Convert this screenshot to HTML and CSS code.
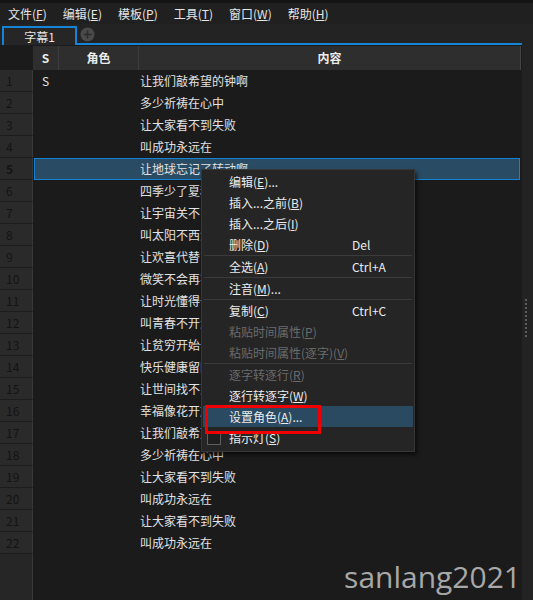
FILE: index.html
```html
<!DOCTYPE html>
<html lang="zh">
<head>
<meta charset="utf-8">
<link rel="stylesheet" href="styles.css">
</head>
<body>
<div class="app">
  <div class="menubar">
    <span class="mb-item">文件(<u>F</u>)</span>
    <span class="mb-item">编辑(<u>E</u>)</span>
    <span class="mb-item">模板(<u>P</u>)</span>
    <span class="mb-item">工具(<u>T</u>)</span>
    <span class="mb-item">窗口(<u>W</u>)</span>
    <span class="mb-item">帮助(<u>H</u>)</span>
  </div>
  <div class="workarea">
    <div class="main">
      <div class="tabbar">
        <div class="tab">字幕1</div>
        <div class="tab-rest">
          <svg class="plus" width="15" height="15" viewBox="0 0 15 15">
            <circle cx="7.5" cy="7.5" r="7" fill="#4a4a4a"/>
            <path d="M7.5 3.5v8M3.5 7.5h8" stroke="#2a2a2a" stroke-width="1.6"/>
          </svg>
        </div>
      </div>
      <div class="header">
        <div class="h-num"></div>
        <div class="h-cell h-s">S</div>
        <div class="h-cell h-role">角色</div>
        <div class="h-cell h-content">内容</div>
      </div>
      <div class="rows">
        <div class="row"><div class="num">1</div><div class="cells"><div class="c-s">S</div><div class="c-role"></div><div class="c-text">让我们敲希望的钟啊</div></div></div>
        <div class="row"><div class="num">2</div><div class="cells"><div class="c-s"></div><div class="c-role"></div><div class="c-text">多少祈祷在心中</div></div></div>
        <div class="row"><div class="num">3</div><div class="cells"><div class="c-s"></div><div class="c-role"></div><div class="c-text">让大家看不到失败</div></div></div>
        <div class="row"><div class="num">4</div><div class="cells"><div class="c-s"></div><div class="c-role"></div><div class="c-text">叫成功永远在</div></div></div>
        <div class="row sel"><div class="num">5</div><div class="cells"><div class="c-s"></div><div class="c-role"></div><div class="c-text">让地球忘记了转动啊</div></div></div>
        <div class="row"><div class="num">6</div><div class="cells"><div class="c-s"></div><div class="c-role"></div><div class="c-text">四季少了夏秋冬</div></div></div>
        <div class="row"><div class="num">7</div><div class="cells"><div class="c-s"></div><div class="c-role"></div><div class="c-text">让宇宙关不了天窗</div></div></div>
        <div class="row"><div class="num">8</div><div class="cells"><div class="c-s"></div><div class="c-role"></div><div class="c-text">叫太阳不西沉</div></div></div>
        <div class="row"><div class="num">9</div><div class="cells"><div class="c-s"></div><div class="c-role"></div><div class="c-text">让欢喜代替了哀愁啊</div></div></div>
        <div class="row"><div class="num">10</div><div class="cells"><div class="c-s"></div><div class="c-role"></div><div class="c-text">微笑不会再害羞</div></div></div>
        <div class="row"><div class="num">11</div><div class="cells"><div class="c-s"></div><div class="c-role"></div><div class="c-text">让时光懂得去倒流</div></div></div>
        <div class="row"><div class="num">12</div><div class="cells"><div class="c-s"></div><div class="c-role"></div><div class="c-text">叫青春不开溜</div></div></div>
        <div class="row"><div class="num">13</div><div class="cells"><div class="c-s"></div><div class="c-role"></div><div class="c-text">让贫穷开始去逃避啊</div></div></div>
        <div class="row"><div class="num">14</div><div class="cells"><div class="c-s"></div><div class="c-role"></div><div class="c-text">快乐健康留四方</div></div></div>
        <div class="row"><div class="num">15</div><div class="cells"><div class="c-s"></div><div class="c-role"></div><div class="c-text">让世间找不到黑暗</div></div></div>
        <div class="row"><div class="num">16</div><div class="cells"><div class="c-s"></div><div class="c-role"></div><div class="c-text">幸福像花开放</div></div></div>
        <div class="row"><div class="num">17</div><div class="cells"><div class="c-s"></div><div class="c-role"></div><div class="c-text">让我们敲希望的钟啊</div></div></div>
        <div class="row"><div class="num">18</div><div class="cells"><div class="c-s"></div><div class="c-role"></div><div class="c-text">多少祈祷在心中</div></div></div>
        <div class="row"><div class="num">19</div><div class="cells"><div class="c-s"></div><div class="c-role"></div><div class="c-text">让大家看不到失败</div></div></div>
        <div class="row"><div class="num">20</div><div class="cells"><div class="c-s"></div><div class="c-role"></div><div class="c-text">叫成功永远在</div></div></div>
        <div class="row"><div class="num">21</div><div class="cells"><div class="c-s"></div><div class="c-role"></div><div class="c-text">让大家看不到失败</div></div></div>
        <div class="row"><div class="num">22</div><div class="cells"><div class="c-s"></div><div class="c-role"></div><div class="c-text">叫成功永远在</div></div></div>
        <div class="row filler"><div class="num"></div><div class="cells"></div></div>
      </div>
    </div>
    <div class="splitter">
      <div class="grip">
        <i></i><i></i><i></i><i></i><i></i><i></i><i></i><i></i><i></i><i></i>
      </div>
    </div>
  </div>

  <div class="ctx">
    <div class="mi"><span></span><span>编辑(<u>E</u>)...</span><span></span></div>
    <div class="mi"><span></span><span>插入...之前(<u>B</u>)</span><span></span></div>
    <div class="mi"><span></span><span>插入...之后(<u>I</u>)</span><span></span></div>
    <div class="mi"><span></span><span>删除(<u>D</u>)</span><span>Del</span></div>
    <div class="sep"></div>
    <div class="mi"><span></span><span>全选(<u>A</u>)</span><span>Ctrl+A</span></div>
    <div class="sep"></div>
    <div class="mi"><span></span><span>注音(<u>M</u>)...</span><span></span></div>
    <div class="sep"></div>
    <div class="mi"><span></span><span>复制(<u>C</u>)</span><span>Ctrl+C</span></div>
    <div class="mi dis"><span></span><span>粘贴时间属性(<u>P</u>)</span><span></span></div>
    <div class="mi dis"><span></span><span>粘贴时间属性(逐字)(<u>V</u>)</span><span></span></div>
    <div class="sep"></div>
    <div class="mi dis"><span></span><span>逐字转逐行(<u>R</u>)</span><span></span></div>
    <div class="mi"><span></span><span>逐行转逐字(<u>W</u>)</span><span></span></div>
    <div class="mi hl"><span></span><span>设置角色(<u>A</u>)...</span><span></span></div>
    <div class="mi"><span class="chk-wrap"><span class="chk"></span></span><span>指示灯(<u>S</u>)</span><span></span></div>
  </div>
  <div class="redbox"></div>
  <div class="watermark">sanlang2021</div>
</div>
</body>
</html>
```

FILE: styles.css
```css
* { box-sizing: border-box; }
html, body {
  margin: 0;
  padding: 0;
  width: 533px;
  height: 600px;
  overflow: hidden;
  background: #1b1b1b;
  font-family: "Noto Sans CJK SC", "Microsoft YaHei", sans-serif;
  font-size: 12px;
  color: #e2e2e2;
}
u { text-decoration: underline; text-underline-offset: 1px; }

.app {
  position: relative;
  width: 533px;
  height: 600px;
  display: flex;
  flex-direction: column;
}

.menubar {
  height: 24px;
  flex: none;
  background: #202020;
  border-top: 3px solid #141414;
  display: flex;
  align-items: center;
  gap: 16px;
  padding-left: 8px;
  color: #e6e6e6;
}
.mb-item { line-height: 20px; }

.workarea {
  flex: 1;
  display: flex;
  min-height: 0;
}
.main {
  width: 522px;
  display: flex;
  flex-direction: column;
}
.splitter {
  flex: 1;
  background: #232323;
  display: flex;
  justify-content: flex-start;
  padding-left: 3px;
  padding-top: 275px;
}
.grip {
  display: flex;
  flex-direction: column;
  gap: 2px;
  height: 40px;
}
.grip i {
  display: block;
  width: 2px;
  height: 2px;
  background: #5c5c5c;
}

.tabbar {
  height: 21px;
  flex: none;
  background: #232323;
  display: flex;
  align-items: flex-end;
  padding-left: 2px;
  margin-bottom: 1px;
}
.tab {
  width: 75px;
  height: 19px;
  border: 2px solid #1583d8;
  border-bottom: none;
  background: #262626;
  text-align: center;
  line-height: 17px;
  color: #e6e6e6;
}
.tab-rest {
  flex: 1;
  height: 19px;
  border-bottom: 2px solid #1583d8;
  display: flex;
  align-items: center;
  padding-left: 3px;
}
.plus { display: block; }

.header {
  height: 24px;
  flex: none;
  display: grid;
  grid-template-columns: 33px 25px 80px 1fr;
  padding-right: 1px;
}
.h-cell {
  background: #2e2e2e;
  font-weight: bold;
  color: #ececec;
  line-height: 24px;
  text-align: center;
  border-left: 1px solid #3c3c3c;
}
.h-s { border-left: none; }
.h-content { border-right: 1px solid #454545; }

.rows {
  flex: 1;
  display: flex;
  flex-direction: column;
}
.row {
  height: 22px;
  flex: none;
  display: flex;
}
.row.filler { flex: 1; }
.num {
  width: 33px;
  flex: none;
  background: #2a2a2a;
  border-bottom: 1px solid #1c1c1c;
  border-right: 1px solid #383838;
  color: #141414;
  padding-left: 6px;
  line-height: 21px;
}
.filler .num { background: #262626; border-bottom: none; }
.cells {
  flex: 1;
  display: grid;
  grid-template-columns: 25px 80px 1fr;
  line-height: 22px;
}
.c-s { text-align: center; }
.c-text { padding-left: 2px; }
.row.sel .num { font-weight: bold; }
.row.sel .cells {
  background: #294c64;
  border: 1px solid #1282d6;
  margin-left: 1px;
  margin-right: 2px;
  line-height: 20px;
  grid-template-columns: 23px 80px 1fr;
}

.ctx {
  position: absolute;
  left: 201px;
  top: 169px;
  width: 214px;
  padding: 1px 0 3px;
  background: #252525;
  border: 1px solid #363636;
  box-shadow: 2px 3px 4px rgba(0, 0, 0, 0.6);
}
.mi {
  height: 21px;
  display: grid;
  grid-template-columns: 27px 123px 1fr;
  align-items: center;
  color: #ececec;
  line-height: 21px;
}
.mi.dis { color: #6b6b6b; }
.mi.hl { background: #2a4a61; margin: 0 1px; grid-template-columns: 26px 123px 1fr; }
.sep {
  height: 1px;
  margin: 0 2px;
  background: #3b3b3b;
}
.chk-wrap {
  display: flex;
  padding-left: 5px;
}
.chk {
  width: 14px;
  height: 14px;
  border: 1px solid #5e5e5e;
  background: #1f1f1f;
}

.redbox {
  position: absolute;
  left: 205px;
  top: 405px;
  width: 116px;
  height: 29px;
  border: 3px solid #f00000;
}

.watermark {
  position: absolute;
  right: 12px;
  bottom: 5px;
  font-family: "Open Sans", "Noto Sans", sans-serif;
  font-size: 30px;
  color: #a8a8a8;
  line-height: 36px;
}
```
